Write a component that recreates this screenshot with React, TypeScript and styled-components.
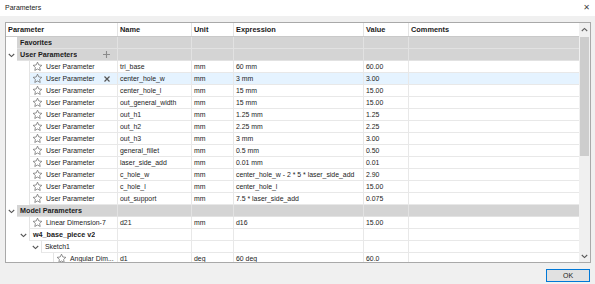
import { FC } from "react"
import styled, { createGlobalStyle } from "styled-components"

type Row = {
  kind: "group" | "param" | "folder"
  level: number
  label: string
  name?: string
  unit?: string
  expr?: string
  value?: string
  bold?: boolean
  chevron?: boolean
  selected?: boolean
  action?: "plus" | "x"
}

const userParams: [string, string, string][] = [
  ["tri_base", "60 mm", "60.00"],
  ["center_hole_w", "3 mm", "3.00"],
  ["center_hole_l", "15 mm", "15.00"],
  ["out_general_width", "15 mm", "15.00"],
  ["out_h1", "1.25 mm", "1.25"],
  ["out_h2", "2.25 mm", "2.25"],
  ["out_h3", "3 mm", "3.00"],
  ["general_fillet", "0.5 mm", "0.50"],
  ["laser_side_add", "0.01 mm", "0.01"],
  ["c_hole_w", "center_hole_w - 2 * 5 * laser_side_add", "2.90"],
  ["c_hole_l", "center_hole_l", "15.00"],
  ["out_support", "7.5 * laser_side_add", "0.075"],
]

const rows: Row[] = [
  { kind: "group", level: 0, label: "Favorites" },
  { kind: "group", level: 0, label: "User Parameters", chevron: true, action: "plus" },
  ...userParams.map(
    ([name, expr, value]): Row => ({
      kind: "param",
      level: 1,
      label: "User Parameter",
      name,
      unit: "mm",
      expr,
      value,
      selected: name === "center_hole_w",
      action: name === "center_hole_w" ? "x" : undefined,
    })
  ),
  { kind: "group", level: 0, label: "Model Parameters", chevron: true },
  { kind: "param", level: 1, label: "Linear Dimension-7", name: "d21", unit: "mm", expr: "d16", value: "15.00" },
  { kind: "folder", level: 1, label: "w4_base_piece v2", chevron: true, bold: true },
  { kind: "folder", level: 2, label: "Sketch1", chevron: true },
  { kind: "param", level: 3, label: "Angular Dim...", name: "d1", unit: "deg", expr: "60 deg", value: "60.0" },
]

const Star: FC = () => (
  <svg width="11" height="11" viewBox="0 0 24 24" fill="none" stroke="#6b6b6b" strokeWidth="1.6" strokeLinejoin="round">
    <path d="M12 2.5l2.9 6.2 6.6.8-4.9 4.6 1.3 6.6L12 17.4l-5.9 3.3 1.3-6.6-4.9-4.6 6.6-.8z" />
  </svg>
)

const Chevron: FC = () => (
  <svg width="7" height="5" viewBox="0 0 7 5" fill="none" stroke="#555" strokeWidth="1.1">
    <path d="M0.8 1l2.7 2.6L6.2 1" />
  </svg>
)

const Plus: FC = () => (
  <svg width="7" height="7" viewBox="0 0 7 7" stroke="#8a8a8a" strokeWidth="1.1">
    <path d="M3.5 0v7M0 3.5h7" />
  </svg>
)

const Cross: FC = () => (
  <svg width="6" height="6" viewBox="0 0 6 6" stroke="#555" strokeWidth="1.2">
    <path d="M0.5 0.5l5 5M5.5 0.5l-5 5" />
  </svg>
)

export default function App() {
  return (
    <>
      <GlobalStyle />
      <Dialog>
        <TitleBar>
          <Title>Parameters</Title>
          <CloseGlyph>✕</CloseGlyph>
        </TitleBar>
        <Body>
          <TableBox>
            <GridArea>
              <HeaderRow>
                <HeadCell $first>Parameter</HeadCell>
                <HeadCell>Name</HeadCell>
                <HeadCell>Unit</HeadCell>
                <HeadCell>Expression</HeadCell>
                <HeadCell>Value</HeadCell>
                <HeadCell>Comments</HeadCell>
              </HeaderRow>
              {rows.map((r, i) => {
                const tone = r.kind === "group" ? "group" : r.selected ? "selected" : "plain"
                return (
                  <DataRow key={i}>
                    <FirstCell>
                      <Gutter $w={11 + r.level * 12}>
                        <ChevronSlot>{r.chevron && <Chevron />}</ChevronSlot>
                      </Gutter>
                      <LabelBox $tone={tone} $lined={r.kind !== "group"}>
                        {r.kind === "param" && (
                          <StarSlot>
                            <Star />
                          </StarSlot>
                        )}
                        <Label $bold={r.kind === "group" || !!r.bold}>{r.label}</Label>
                        {r.action && <ActionSlot>{r.action === "plus" ? <Plus /> : <Cross />}</ActionSlot>}
                      </LabelBox>
                    </FirstCell>
                    <Cell $tone={tone}>{r.name}</Cell>
                    <Cell $tone={tone}>{r.unit}</Cell>
                    <Cell $tone={tone}>{r.expr}</Cell>
                    <Cell $tone={tone}>{r.value}</Cell>
                    <Cell $tone={tone} />
                  </DataRow>
                )
              })}
            </GridArea>
            <ScrollBar>
              <ScrollArrow>
                <svg width="7" height="5" viewBox="0 0 7 5" fill="none" stroke="#606060" strokeWidth="1.1">
                  <path d="M0.8 4l2.7-2.6L6.2 4" />
                </svg>
              </ScrollArrow>
              <Track>
                <Thumb />
              </Track>
              <ScrollArrow>
                <Chevron />
              </ScrollArrow>
            </ScrollBar>
          </TableBox>
          <Footer>
            <OkButton>OK</OkButton>
          </Footer>
        </Body>
      </Dialog>
    </>
  )
}

const GlobalStyle = createGlobalStyle`
  html, body {
    margin: 0;
    padding: 0;
    background: #f0f0f0;
  }
  body {
    font-family: "Liberation Sans", Arial, sans-serif;
    color: #1b1b1b;
  }
`

const Dialog = styled.div`
  width: 595px;
  height: 284px;
  display: flex;
  flex-direction: column;
  overflow: hidden;
`

const TitleBar = styled.div`
  height: 16px;
  background: #ffffff;
  display: flex;
  align-items: center;
  justify-content: space-between;
  padding: 0 5px 2px 5px;
  box-sizing: border-box;
`

const Title = styled.span`
  font-size: 7px;
  color: #222;
`

const CloseGlyph = styled.span`
  font-family: "DejaVu Sans", sans-serif;
  font-size: 8px;
  color: #444;
  margin-right: 0px;
`

const Body = styled.div`
  flex: 1;
  background: #f0f0f0;
  display: flex;
  flex-direction: column;
  padding: 6px 4px 0 5px;
`

const TableBox = styled.div`
  height: 241px;
  display: flex;
  border: 1px solid #a9a9a9;
  background: #ffffff;
  overflow: hidden;
  box-sizing: border-box;
`

const GridArea = styled.div`
  width: 573px;
  display: flex;
  flex-direction: column;
  overflow: hidden;
`

const columns = "111px 74px 42px 130px 45px 171px"

const HeaderRow = styled.div`
  display: grid;
  grid-template-columns: ${columns};
  height: 14px;
  flex: none;
  border-bottom: 1px solid #c9c9c9;
  box-sizing: border-box;
`

const HeadCell = styled.div<{ $first?: boolean }>`
  font-size: 7.4px;
  font-weight: bold;
  line-height: 13px;
  padding-left: ${({ $first }) => ($first ? "2px" : "2px")};
  border-left: ${({ $first }) => ($first ? "none" : "1px solid #e4e4e4")};
  white-space: nowrap;
  overflow: hidden;
`

const DataRow = styled.div`
  display: grid;
  grid-template-columns: ${columns};
  height: 12px;
  flex: none;
`

const tones = {
  group: "#d4d4d4",
  selected: "#e5f3ff",
  plain: "#ffffff",
}

const FirstCell = styled.div`
  display: flex;
  min-width: 0;
`

const Gutter = styled.div<{ $w: number }>`
  width: ${({ $w }) => $w}px;
  flex: none;
  display: flex;
  justify-content: flex-end;
  background: #ffffff;
`

const ChevronSlot = styled.div`
  width: 11px;
  display: flex;
  align-items: center;
  justify-content: center;
`

const LabelBox = styled.div<{ $tone: keyof typeof tones; $lined: boolean }>`
  flex: 1;
  min-width: 0;
  display: flex;
  align-items: center;
  position: relative;
  background: ${({ $tone }) => tones[$tone]};
  border-left: ${({ $lined }) => ($lined ? "1px solid #e4e4e4" : "none")};
  border-bottom: 1px solid ${({ $tone }) => ($tone === "group" ? "#e2e2e2" : "#e8e8e8")};
  box-sizing: border-box;
  padding-left: 2px;
`

const StarSlot = styled.div`
  width: 13px;
  height: 11px;
  display: flex;
  align-items: center;
  flex: none;
`

const Label = styled.span<{ $bold: boolean }>`
  font-size: ${({ $bold }) => ($bold ? "7.2px" : "6.9px")};
  font-weight: ${({ $bold }) => ($bold ? "bold" : "normal")};
  white-space: nowrap;
  overflow: hidden;
  padding-left: 1px;
`

const ActionSlot = styled.div`
  position: absolute;
  right: 7px;
  top: 0;
  height: 11px;
  display: flex;
  align-items: center;
`

const Cell = styled.div<{ $tone: keyof typeof tones }>`
  font-size: 6.9px;
  line-height: 11px;
  padding-left: 2px;
  white-space: nowrap;
  overflow: hidden;
  background: ${({ $tone }) => tones[$tone]};
  border-left: 1px solid ${({ $tone }) => ($tone === "group" ? "#e2e2e2" : "#e8e8e8")};
  border-bottom: 1px solid ${({ $tone }) => ($tone === "group" ? "#e2e2e2" : "#e8e8e8")};
  box-sizing: border-box;
`

const ScrollBar = styled.div`
  width: 11px;
  flex: none;
  display: flex;
  flex-direction: column;
  background: #f0f0f0;
`

const ScrollArrow = styled.div`
  height: 12px;
  display: flex;
  align-items: center;
  justify-content: center;
  flex: none;
`

const Track = styled.div`
  flex: 1;
  padding: 2px 1px;
`

const Thumb = styled.div`
  height: 119px;
  background: #cdcdcd;
`

const Footer = styled.div`
  display: flex;
  justify-content: flex-end;
  padding: 6px 1px 0 0;
`

const OkButton = styled.button`
  width: 44px;
  height: 13px;
  padding: 0;
  border: 1px solid #0078d7;
  background: #e1e1e1;
  font-family: "Liberation Sans", Arial, sans-serif;
  font-size: 7px;
  color: #1b1b1b;
  box-shadow: inset 0 0 0 1px #e1e1e1;
`
